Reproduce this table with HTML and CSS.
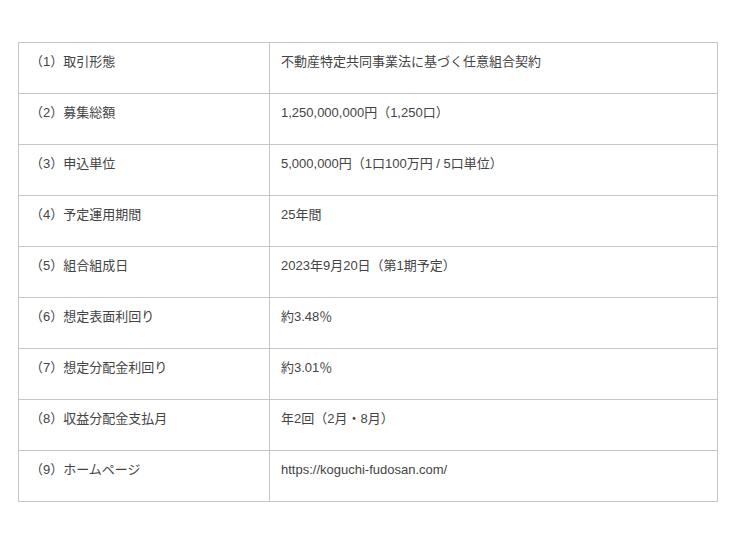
FILE: index.html
```html
<!DOCTYPE html>
<html lang="ja">
<head>
<meta charset="utf-8">
<link rel="stylesheet" href="styles.css">
</head>
<body>
<div class="page">
  <div class="spec">
    <div class="cell label">（1）取引形態</div>
    <div class="cell value">不動産特定共同事業法に基づく任意組合契約</div>
    <div class="cell label">（2）募集総額</div>
    <div class="cell value">1,250,000,000円（1,250口）</div>
    <div class="cell label">（3）申込単位</div>
    <div class="cell value">5,000,000円（1口100万円 / 5口単位）</div>
    <div class="cell label">（4）予定運用期間</div>
    <div class="cell value">25年間</div>
    <div class="cell label">（5）組合組成日</div>
    <div class="cell value">2023年9月20日（第1期予定）</div>
    <div class="cell label">（6）想定表面利回り</div>
    <div class="cell value">約3.48％</div>
    <div class="cell label">（7）想定分配金利回り</div>
    <div class="cell value">約3.01％</div>
    <div class="cell label">（8）収益分配金支払月</div>
    <div class="cell value">年2回（2月・8月）</div>
    <div class="cell label">（9）ホームページ</div>
    <div class="cell value">https://koguchi-fudosan.com/</div>
  </div>
</div>
</body>
</html>
```

FILE: styles.css
```css
html, body {
  margin: 0;
  padding: 0;
  background: #ffffff;
}
.page {
  padding: 42px 0 0 18px;
}
.spec {
  display: grid;
  grid-template-columns: 251px 448px;
  width: 700px;
  box-sizing: border-box;
  border-top: 1px solid #c6c6c6;
  border-left: 1px solid #c6c6c6;
  font-family: "Liberation Sans", "Noto Sans CJK JP", sans-serif;
  font-size: 13px;
  line-height: 18px;
  color: #444444;
}
.cell {
  box-sizing: border-box;
  height: 51px;
  border-right: 1px solid #c6c6c6;
  border-bottom: 1px solid #c6c6c6;
  padding: 10px 12px 0 11px;
  white-space: nowrap;
}
```
